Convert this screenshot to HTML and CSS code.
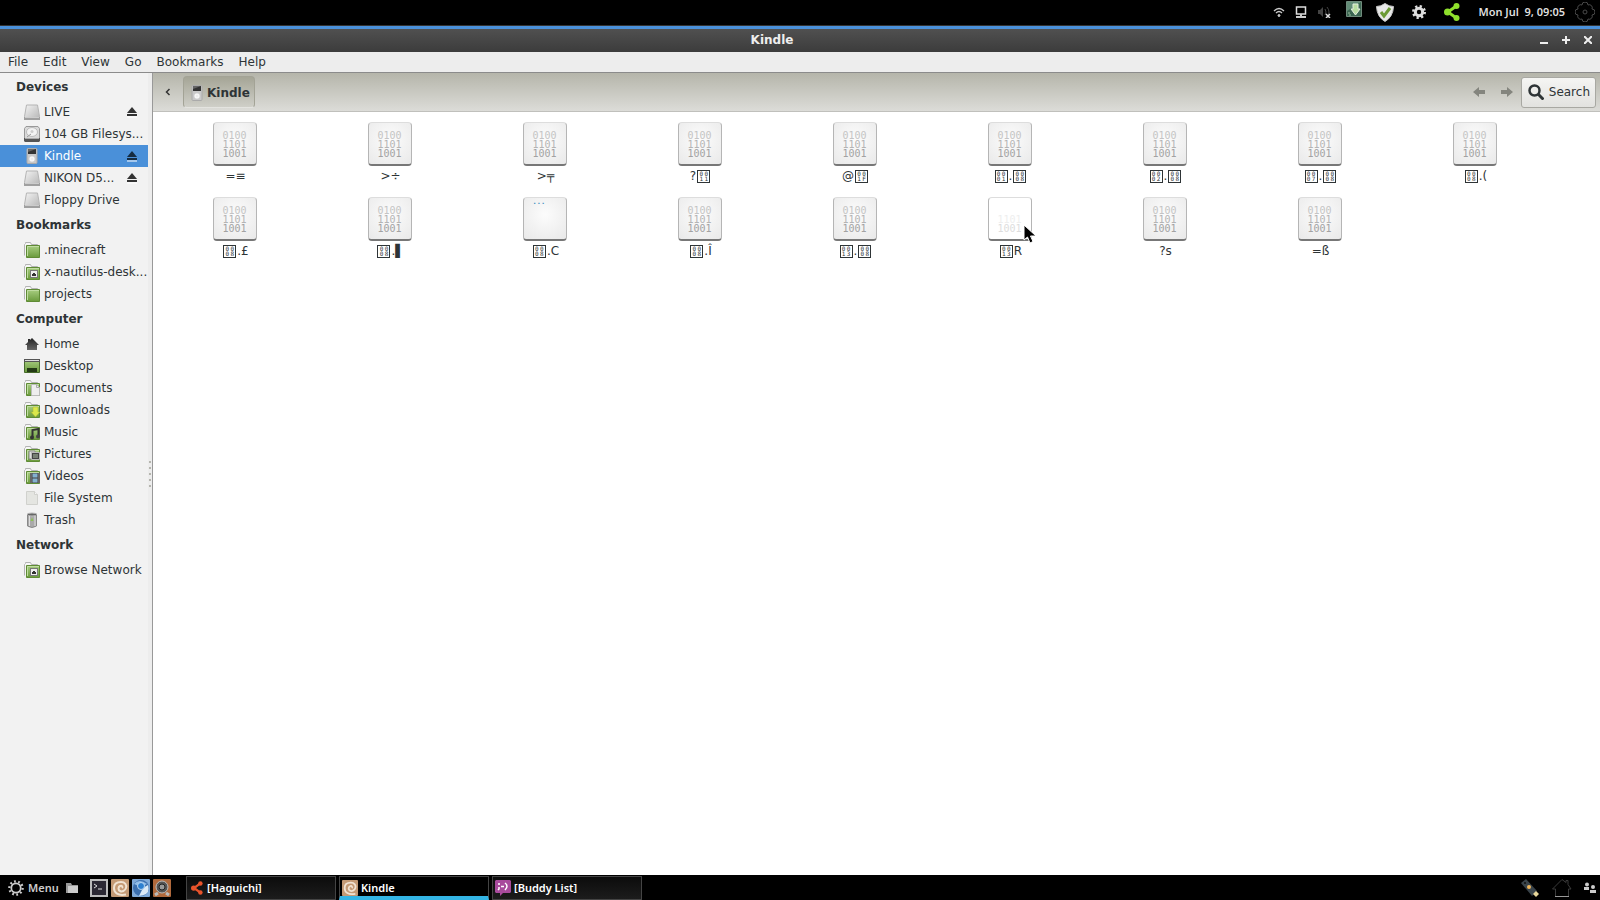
FILE: index.html
```html
<!DOCTYPE html>
<html lang="en">
<head>
  <meta charset="UTF-8">
  <meta name="viewport" content="width=device-width, initial-scale=1.0">
  <title>Kindle</title>
  <link rel="stylesheet" href="styles.css">
</head>
<body>
  <svg class="defs" width="0" height="0" aria-hidden="true">
    <defs>
      <linearGradient id="g-green" x1="0" y1="0" x2="0" y2="1"><stop offset="0" stop-color="#a9cf82"/><stop offset="1" stop-color="#6a9a3c"/></linearGradient>
      <linearGradient id="g-metal" x1="0" y1="0" x2="1" y2="1"><stop offset="0" stop-color="#f4f4f4"/><stop offset="1" stop-color="#b4b4b4"/></linearGradient>
      <linearGradient id="g-dark" x1="0" y1="0" x2="0" y2="1"><stop offset="0" stop-color="#222"/><stop offset="1" stop-color="#666"/></linearGradient>
      <symbol id="i-drive" viewBox="0 0 16 16">
        <path d="M2.500 1h11l2 11.500v3H.5v-3z" fill="url(#g-metal)" stroke="#b4b4b4"/>
        <path d="M0 13h16v3H0z" fill="#a0a0a0"/><path d="M1 13.500h14" stroke="#ccc"/>
      </symbol>
      <symbol id="i-disk" viewBox="0 0 16 16">
        <path d="M2 .5h12l1.500 2v10H.5v-10z" fill="#d9d9d9" stroke="#999"/>
        <ellipse cx="8" cy="6" rx="5.500" ry="4.500" fill="#f2f2f2" stroke="#bbb"/>
        <circle cx="8" cy="5.500" r="1.500" fill="#ccc"/>
        <path d="M3 11l4-3" stroke="#999"/>
        <path d="M0 12h16v3l-1 1H1l-1-1z" fill="#555"/><path d="M1 12.500h14" stroke="#aaa"/>
      </symbol>
      <symbol id="i-player" viewBox="0 0 16 16">
        <rect x="3" y=".5" width="10" height="15" rx="1" fill="#c9c9c9" stroke="#aaa"/>
        <path d="M4 1h8v5H4z" fill="#333"/><path d="M4 1h8L4 4z" fill="#666"/>
        <rect x="6" y="9" width="4" height="4" rx="1" fill="#eee" stroke="#fff"/>
      </symbol>
      <symbol id="i-folder" viewBox="0 0 16 16">
        <path d="M.5 13.500v-11l1-1h0v-1h5l1 2h6v3" fill="#f6f6f6" stroke="#b3b3b3"/>
        <path d="M2.500 3.500h13v12h-13z" fill="url(#g-green)" stroke="#5f8b35"/>
        <path d="M3.500 14V4.500H15" fill="none" stroke="#c0dca2"/>
      </symbol>
      <symbol id="i-remote" viewBox="0 0 16 16">
        <use href="#i-folder"/><path d="M6 6h8v8H6z" fill="#777"/><path d="M7 7h6v6H7z" fill="#eee"/><path d="M8 10h1V9h2v1h1v2H8z" fill="#333"/>
      </symbol>
      <symbol id="i-home" viewBox="0 0 16 16"><path d="M8 2l7 7h-2v5H3V9H1l3-3V3h2v1z" fill="url(#g-dark)"/></symbol>
      <symbol id="i-desktop" viewBox="0 0 16 16">
        <path d="M.5 1.500h15v13H.5z" fill="url(#g-green)" stroke="#476a2b"/>
        <path d="M0 1h16v3H0z" fill="#555"/><path d="M1 2h14v1H1z" fill="#ddd"/><path d="M3 10h10v4H3z" fill="#243b16"/>
      </symbol>
      <symbol id="i-docs" viewBox="0 0 16 16"><use href="#i-folder"/><path d="M7.500 4.500h5l3 3v8h-8z" fill="#eee" stroke="#bbb"/><path d="M12.500 4.500v3h3" fill="none" stroke="#aaa"/></symbol>
      <symbol id="i-down" viewBox="0 0 16 16"><use href="#i-folder"/><path d="M9 5h5v5h2l-4.500 5L7 10h2z" fill="#dbe84c" stroke="#a4b52e" stroke-width=".5"/></symbol>
      <symbol id="i-music" viewBox="0 0 16 16"><use href="#i-folder"/><path d="M8.500 13V6l6-1v7" fill="none" stroke="#333" stroke-width="2"/><circle cx="8" cy="13.500" r="2" fill="#333"/><circle cx="14" cy="12.500" r="2" fill="#444"/></symbol>
      <symbol id="i-pics" viewBox="0 0 16 16"><use href="#i-folder"/><path d="M5 5h6v8H5z" fill="#ddd" stroke="#888"/><path d="M7.500 6.500h8v7h-8z" fill="#444" stroke="#bbb"/><path d="M9 8h5v4H9z" fill="#777f74"/></symbol>
      <symbol id="i-video" viewBox="0 0 16 16"><use href="#i-folder"/><path d="M6 5h10v10H6z" fill="#444"/><path d="M8.500 5.500h5v4h-5zm0 5h5v4h-5z" fill="#83b2d0"/><path d="M7 5.500v9M15 5.500v9" stroke="#ccc" stroke-dasharray="1 1"/></symbol>
      <symbol id="i-page" viewBox="0 0 16 16"><path d="M2.500 1.500h8l3 3v10h-11z" fill="#e4e5e1" stroke="#d0d1cd"/><path d="M10.500 1.500v3h3" fill="#f6f6f6" stroke="#d0d1cd"/></symbol>
      <symbol id="i-trash" viewBox="0 0 16 16"><path d="M3.500 2v12q4.500 3 9 0V2z" fill="#aaa" stroke="#888"/><ellipse cx="8" cy="2.500" rx="4.500" ry="1.500" fill="#666" stroke="#bbb"/><path d="M5.500 4v10M11 4v10" stroke="#ddd"/><path d="M6.500 9L8 5.500 9.500 9z" fill="#8cc152"/></symbol>
      <symbol id="i-eject" viewBox="0 0 12 12"><path d="M6 1l5 6H1z" fill="currentColor"/><path d="M1 8h10v2H1z" fill="currentColor"/><path d="M1 11h10" stroke="#fff"/></symbol>
      <symbol id="i-gear" viewBox="0 0 16 16">
        <circle cx="8" cy="8" r="6.500" fill="none" stroke="currentColor" stroke-width="3" stroke-dasharray="2.500 2.600"/>
        <circle cx="8" cy="8" r="4.200" fill="none" stroke="currentColor" stroke-width="3.400"/>
      </symbol>
      <symbol id="i-gear-thin" viewBox="0 0 18 18">
        <circle cx="9" cy="9" r="7.500" fill="none" stroke="currentColor" stroke-width="2.500" stroke-dasharray="2 2.700"/>
        <circle cx="9" cy="9" r="5.300" fill="none" stroke="currentColor" stroke-width="2"/>
      </symbol>
      <symbol id="i-share" viewBox="0 0 16 20"><path d="M13 3.500L4 10l9 6.500" fill="none" stroke="currentColor" stroke-width="3"/><circle cx="12.500" cy="4" r="3" fill="currentColor"/><circle cx="3.500" cy="10" r="3.500" fill="currentColor"/><circle cx="12.500" cy="16" r="3" fill="currentColor"/></symbol>
      <symbol id="i-snail" viewBox="0 0 18 18"><rect width="18" height="18" rx="1" fill="#c49a75"/><path d="M15 15.500C7 17 3 14 3 9s3-6 7-6 6 3 5 6-4 4-6 3-2-4 0-5 3 1 2 2" fill="none" stroke="#f1e3d3" stroke-width="2"/></symbol>
    </defs>
  </svg>

  <header class="panel">
    <div class="tray">
      <svg width="12" height="12" viewBox="0 0 12 12" fill="none" stroke="#ccc"><path d="M1 5q5-5 10 0M3 7q3-3 6 0" stroke-width="1.300"/><circle cx="6" cy="9.500" r="1" fill="#ccc"/></svg>
      <svg width="12" height="12" viewBox="0 0 12 12"><path d="M1.500 1h9v7h-9z" fill="none" stroke="#ddd" stroke-width="1.500"/><path d="M5 8h2v2H5zM1 10h10v2H1z" fill="#ccc"/></svg>
      <svg width="14" height="12" viewBox="0 0 14 12"><path d="M1 4h2l3-3v10L3 8H1z" fill="#444"/><path d="M8 3q2 3 0 6M10 1q4 5 0 10" fill="none" stroke="#444"/><path d="M9 8l4 4m0-4l-4 4" stroke="#ddd" stroke-width="1.500"/></svg>
      <svg class="update" width="16" height="16" viewBox="0 0 16 16"><path d="M.5.500h15v15H.5z" fill="#3c6652" stroke="#708b7c"/><path d="M1 1h14L1 10z" fill="#628b76"/><path d="M7 3h5v5h2l-4.500 6L5 8h2z" fill="#b9dda1" stroke="#e5eee0"/><path d="M2 12h2m-1 2h2" stroke="#9b9"/></svg>
      <svg width="18" height="19" viewBox="0 0 18 19"><path d="M9 .5q4 3 8.500 3Q17 14 9 18.500 1 14 .5 3.500 5 3.500 9 .5z" fill="#e8e8e8" stroke="#c8c8c8"/><path d="M5 9l3 4 6-8" fill="none" stroke="#6b9a35" stroke-width="3"/></svg>
      <svg class="cog" width="14" height="14"><use href="#i-gear"/></svg>
      <svg class="share" width="16" height="20"><use href="#i-share"/></svg>
    </div>
    <time class="clock">Mon Jul &nbsp;9, 09:05</time>
    <svg width="20" height="20" viewBox="0 0 20 20" fill="none" stroke="#4a4a4a"><circle cx="10" cy="10" r="2"/><path d="M7 3a3 3 0 0 1 6 0a3 3 0 0 1 4 4a3 3 0 0 1 0 6a3 3 0 0 1-4 4a3 3 0 0 1-6 0a3 3 0 0 1-4-4a3 3 0 0 1 0-6a3 3 0 0 1 4-4z"/></svg>
  </header>

  <main class="window">
    <div class="titlebar">
      <span></span>
      <h1>Kindle</h1>
      <div class="controls">
        <button aria-label="Minimize"><svg width="8" height="8"><path d="M0 6h8v2H0z" fill="#eee"/></svg></button>
        <button aria-label="Maximize"><svg width="8" height="8"><path d="M4 0v8M0 4h8" stroke="#eee" stroke-width="2"/></svg></button>
        <button aria-label="Close"><svg width="8" height="8"><path d="M0 0l8 8M8 0L0 8" stroke="#eee" stroke-width="2"/></svg></button>
      </div>
    </div>
    <nav class="menubar">
      <button>File</button><button>Edit</button><button>View</button><button>Go</button><button>Bookmarks</button><button>Help</button>
    </nav>

    <div class="body">
      <aside class="sidebar">
        <h2>Devices</h2>
        <ul>
          <li><a href="#"><svg><use href="#i-drive"/></svg><span>LIVE</span></a><button class="eject" aria-label="Eject LIVE"><svg><use href="#i-eject"/></svg></button></li>
          <li><a href="#"><svg><use href="#i-disk"/></svg><span>104 GB Filesys...</span></a></li>
          <li class="selected"><a href="#"><svg><use href="#i-player"/></svg><span>Kindle</span></a><button class="eject" aria-label="Eject Kindle"><svg><use href="#i-eject"/></svg></button></li>
          <li><a href="#"><svg><use href="#i-drive"/></svg><span>NIKON D5...</span></a><button class="eject" aria-label="Eject NIKON"><svg><use href="#i-eject"/></svg></button></li>
          <li><a href="#"><svg><use href="#i-drive"/></svg><span>Floppy Drive</span></a></li>
        </ul>
        <h2>Bookmarks</h2>
        <ul>
          <li><a href="#"><svg><use href="#i-folder"/></svg><span>.minecraft</span></a></li>
          <li><a href="#"><svg><use href="#i-remote"/></svg><span>x-nautilus-desk...</span></a></li>
          <li><a href="#"><svg><use href="#i-folder"/></svg><span>projects</span></a></li>
        </ul>
        <h2>Computer</h2>
        <ul>
          <li><a href="#"><svg><use href="#i-home"/></svg><span>Home</span></a></li>
          <li><a href="#"><svg><use href="#i-desktop"/></svg><span>Desktop</span></a></li>
          <li><a href="#"><svg><use href="#i-docs"/></svg><span>Documents</span></a></li>
          <li><a href="#"><svg><use href="#i-down"/></svg><span>Downloads</span></a></li>
          <li><a href="#"><svg><use href="#i-music"/></svg><span>Music</span></a></li>
          <li><a href="#"><svg><use href="#i-pics"/></svg><span>Pictures</span></a></li>
          <li><a href="#"><svg><use href="#i-video"/></svg><span>Videos</span></a></li>
          <li><a href="#"><svg><use href="#i-page"/></svg><span>File System</span></a></li>
          <li><a href="#"><svg><use href="#i-trash"/></svg><span>Trash</span></a></li>
        </ul>
        <h2>Network</h2>
        <ul>
          <li><a href="#"><svg><use href="#i-remote"/></svg><span>Browse Network</span></a></li>
        </ul>
      </aside>
      <div class="splitter"><i></i><i></i><i></i><i></i><i></i></div>

      <section class="content">
        <div class="toolbar">
          <button class="prev" aria-label="Scroll path"><svg width="6" height="8"><path d="M4.500 1L1.500 4l3 3" fill="none" stroke="#333" stroke-width="1.500"/></svg></button>
          <button class="crumb"><svg width="16" height="16"><use href="#i-player"/></svg>Kindle</button>
          <button class="nav" aria-label="Back"><svg width="12" height="10"><path d="M6 0v3h6v4H6v3L0 5z" fill="#84857e"/></svg></button>
          <button class="nav" aria-label="Forward"><svg width="12" height="10"><path d="M6 0v3H0v4h6v3l6-5z" fill="#84857e"/></svg></button>
          <button class="search"><svg width="16" height="16" viewBox="0 0 16 16" fill="none" stroke="#2e3436"><circle cx="6.500" cy="6.500" r="5" stroke-width="2.500"/><path d="M10 10l5.500 5.500" stroke-width="3"/></svg>Search</button>
        </div>
        <div class="files" id="files"></div>
      </section>
    </div>
  </main>

  <footer class="taskbar">
    <button class="menu"><svg width="16" height="16"><use href="#i-gear-thin"/></svg>Menu</button>
    <button class="show" aria-label="Files"><svg width="13" height="12"><path d="M0 1h5l1 2h6v1H2v7H0z" fill="#999"/><path d="M2 4h10v7H2z" fill="#ccc"/></svg></button>
    <div class="launchers">
      <button aria-label="Terminal"><svg width="18" height="18"><path d="M1 1h16v16H1z" fill="#2b2833" stroke="#bbb" stroke-width="2"/><path d="M4 5l3 2-3 2M8 10h4" fill="none" stroke="#ddd"/></svg></button>
      <button aria-label="Nautilus"><svg width="18" height="18"><use href="#i-snail"/></svg></button>
      <button aria-label="Chromium"><svg width="18" height="18"><rect width="18" height="18" rx="1" fill="#7fa9d8"/><circle cx="9" cy="9" r="8" fill="#3c6fae"/><path d="M2 5q5-6 13 0L9 8z" fill="#8fbce8"/><path d="M7 17L11 9l5-3q3 10-9 11z" fill="#dce9f5"/><circle cx="9" cy="7" r="3.500" fill="#2d7fd0" stroke="#b8d4ef"/></svg></button>
      <button aria-label="Player"><svg width="18" height="18"><rect width="18" height="18" rx="1" fill="#b0693c"/><path d="M2 16l3-2m11 2l-3-2" stroke="#bbb" stroke-width="3"/><circle cx="9" cy="8" r="6" fill="#555" stroke="#bbb"/><circle cx="9" cy="8" r="3" fill="#999" stroke="#222"/></svg></button>
    </div>
    <div class="tasks">
      <button><svg class="red" width="12" height="16"><use href="#i-share"/></svg>[Haguichi]</button>
      <button class="active"><svg width="16" height="16"><use href="#i-snail"/></svg>Kindle</button>
      <button><svg width="16" height="16" viewBox="0 0 16 16"><path d="M1 0h14l1 1v11l-1 1H8l-3 3v-3H1l-1-1V1z" fill="#a84a9c"/><path d="M4 3v2M4 7v2l-1 1M6 6.500h3M10 3q4 3 0 7" fill="none" stroke="#fff" stroke-width="1.500"/></svg>[Buddy List]</button>
    </div>
    <div class="applets">
      <svg width="20" height="20" viewBox="0 0 20 20"><path d="M1 5l5-4 11 12-5 5z" fill="#39434a"/><circle cx="9" cy="9" r="2" fill="#f0b65a"/><circle cx="5" cy="5" r="1" fill="#111"/><path d="M13 16l3-3 3 3-3 3z" fill="#e8d79b"/></svg>
      <svg width="20" height="20" viewBox="0 0 20 20" fill="none"><path d="M3.500 18v-7h-3L10 1.500l4 3v-2h2v4l3 4.500h-2.500v7" stroke="#3b3b3b"/><path d="M3 18.500h14" stroke="#999"/></svg>
      <svg width="12" height="12" viewBox="0 0 12 12" fill="#ccc"><circle cx="3" cy="2.500" r="2"/><path d="M0 5h5v3H0z"/><circle cx="9" cy="5" r="2"/><path d="M6 8h6v3H6z"/></svg>
    </div>
  </footer>

  <script>
    // {hhhh} marks a character without a glyph, drawn as a box with its hex code
    const files = [
      '=≡', '>÷', '>╤', '?{0011}', '@{001F}', '{0001}.{0008}', '{0002}.{0008}', '{0007}.{0008}', '{0008}.(',
      '{0008}.£', '{0008}.▌', '{0008}.C', '{0008}.Î', '{0013}.{0008}', '{0013}R', '?s', '=ß'
    ];
    const textFile = 11;
    const hovered = 14;
    const cursor = '<svg class="cursor" width="14" height="20" viewBox="0 0 14 20"><path d="M1 1v15l3.500-3 2.500 6 3-1.500-2.500-5.500H13z" fill="#000" stroke="#fff"/></svg>';

    function hexBox(match, code) {
      return '<span class="hex">' + [...code].map(c => `<b>${c}</b>`).join('') + '</span>';
    }

    document.getElementById('files').innerHTML = files.map((name, i) => {
      const label = name.replace(/>/g, '&gt;').replace(/\{(....)\}/g, hexBox);
      const body = i === textFile ? '<span class="dots">...</span>' : '<span>0100</span><span>1101</span><span>1001</span>';
      return `<button class="file${i === hovered ? ' hover' : ''}">
        <span class="thumb">${body}${i === hovered ? cursor : ''}</span>
        <span class="name">${label}</span>
      </button>`;
    }).join('');
  </script>
</body>
</html>
```
FILE: styles.css
```css
* { margin: 0; padding: 0; box-sizing: border-box; }
body {
  display: flex;
  flex-direction: column;
  min-height: 100vh;
  background: #000;
  color: #2e3436;
  font: 12px/16px "DejaVu Sans", sans-serif;
}
button { border: none; background: none; color: inherit; font: inherit; }
a { color: inherit; text-decoration: none; }
ul { list-style: none; }
svg { display: block; flex: none; }
.defs { position: absolute; }

/* top panel */
.panel {
  display: flex;
  align-items: center;
  justify-content: flex-end;
  height: 25px;
  padding: 0 5px 1px 0;
  background: #000;
}
.tray { display: flex; align-items: center; gap: 10px; margin-right: 18px; }
.update { margin: 0 4px 6px 5px; }
.cog { color: #ddd; margin: 0 8px; }
.share { color: #8fe02c; }
.clock { color: #dfdfdf; font: 600 11px/16px "Noto Sans", sans-serif; margin-right: 10px; }

/* window frame */
.window {
  flex: 1;
  display: flex;
  flex-direction: column;
  border-top: 1px solid #333;
  background: #fff;
}
.titlebar {
  display: grid;
  grid-template-columns: 1fr auto 1fr;
  align-items: center;
  height: 26px;
  padding: 0 8px 1px 0;
  border-top: 3px solid #4a90d9;
  background: linear-gradient(#505050, #3c3c3c);
  color: #eee;
}
.titlebar h1 { font-size: 12px; line-height: 16px; padding-right: 48px; }
.controls { display: flex; justify-content: flex-end; gap: 14px; }
.menubar {
  display: flex;
  height: 21px;
  padding-left: 1px;
  background: #ededed;
  border-bottom: 1px solid #8b8b8b;
}
.menubar button { padding: 0 8px 1px 7px; }

.body { flex: 1; display: flex; }

/* places */
.sidebar { width: 148px; flex: none; background: #f2f2f2; }
.sidebar h2 { padding: 6px 16px; font-size: 12px; line-height: 16px; }
.sidebar li { display: flex; align-items: center; height: 22px; padding: 0 10px 0 24px; white-space: nowrap; }
.sidebar a { display: flex; align-items: center; gap: 4px; flex: 1; min-width: 0; }
.sidebar a svg { width: 16px; height: 16px; }
.eject { color: #333; }
.eject svg { width: 12px; height: 12px; }
.selected { background: #4a90d9; color: #fff; }
.selected .eject { color: #152c42; }
.splitter {
  width: 5px;
  flex: none;
  display: flex;
  flex-direction: column;
  align-items: center;
  justify-content: center;
  gap: 4px;
  background: #ededed;
  border-right: 1px solid #999;
}
.splitter i { width: 2px; height: 2px; background: #b5b5ae; }

/* location bar */
.content { flex: 1; min-width: 0; }
.toolbar {
  display: flex;
  align-items: center;
  height: 39px;
  padding: 0 4px;
  background: linear-gradient(#b5b5aa, #dcdcd8);
  border-bottom: 1px solid #c0c0bc;
}
.prev { padding: 0 12px 0 8px; }
.crumb {
  display: flex;
  align-items: center;
  gap: 2px;
  height: 32px;
  margin-right: auto;
  padding: 1px 4px 0 5px;
  border: 1px solid #a3a396;
  border-bottom-color: #e4e4e0;
  border-radius: 4px;
  background: linear-gradient(#a5a596, #cfcfc8);
  font-weight: bold;
}
.nav { padding: 0 8px; }
.search {
  display: flex;
  align-items: center;
  gap: 5px;
  height: 31px;
  padding: 0 5px 0 6px;
  border: 1px solid #a8a8a2;
  border-radius: 3px;
  background: linear-gradient(#f5f5f3, #e2e2df);
}

/* icon view */
.files {
  display: grid;
  grid-template-columns: repeat(auto-fill, 155px);
  padding: 10px 0 0 4px;
}
.file { display: flex; flex-direction: column; align-items: center; height: 75px; }
.thumb {
  position: relative;
  display: flex;
  flex-direction: column;
  width: 44px;
  height: 44px;
  padding: 8px 9px;
  border: 1px solid #b5b5b5;
  border-top-color: #ddd;
  border-bottom: 2px solid #777;
  border-radius: 4px;
  background: radial-gradient(circle at 50% 40%, #fcfcfc, #e9e9e9);
  color: #a2a2a2;
  font: 10px/9px "DejaVu Sans Mono", monospace;
}
.thumb span:nth-child(1) { color: #c4c4c4; }
.thumb span:nth-child(2) { color: #b4b4b4; }
.thumb span.dots { margin-top: -8px; text-align: left; color: #3d8fbf; font: bold 7px/9px "DejaVu Sans Mono", monospace; }
.hover .thumb { background: #fff; color: #ddd; }
.hover .thumb span:nth-child(1) { color: #fff; }
.hover .thumb span:nth-child(2) { color: #eee; }
.cursor { position: absolute; left: 34px; top: 26px; }
.name { display: flex; align-items: center; height: 16px; margin-top: 2px; padding-left: 2px; white-space: pre; }
.hex {
  display: grid;
  grid-template-columns: 4px 4px;
  column-gap: 1px;
  align-content: center;
  justify-content: center;
  width: 13px;
  height: 13px;
  margin: 0 1px;
  border: 1px solid #2e3436;
  font: 6px/5px "DejaVu Sans Mono", monospace;
}
.hex b { font-weight: normal; }

/* bottom panel */
.taskbar {
  display: flex;
  align-items: center;
  height: 25px;
  padding: 0 4px 0 8px;
  background: #000;
  color: #fff;
  font: 600 11px/16px "Noto Sans", sans-serif;
}
.menu { display: flex; align-items: center; gap: 4px; width: 48px; color: #ccc; }
.show { margin: 0 11px 0 10px; }
.launchers { display: flex; gap: 3px; }
.tasks { display: flex; gap: 3px; margin-left: 15px; align-self: flex-end; }
.tasks button {
  display: flex;
  align-items: center;
  gap: 3px;
  width: 150px;
  height: 24px;
  padding: 0 2px;
  border: 1px solid #444;
  background: linear-gradient(#0c0c0c, #1c1c1c);
}
.tasks .active { padding-top: 3px; border-bottom: 4px solid #33b5e5; background: #000; }
.red { color: #e8532b; margin: 0 1px 0 2px; }
.applets { display: flex; align-items: center; gap: 12px; margin-left: auto; }
```
